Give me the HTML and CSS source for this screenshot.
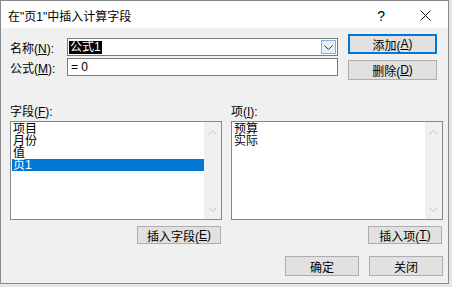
FILE: index.html
```html
<!DOCTYPE html>
<html lang="zh-CN">
<head>
    <meta charset="UTF-8">
    <title>在“页1”中插入计算字段</title>
    <link rel="stylesheet" href="styles.css">
</head>
<body>

    <div class="dialog">
        <div class="titlebar">
            <span class="title">在"页1"中插入计算字段</span>
            <span class="help">?</span>
            <span class="close">
                <svg width="11" height="11" viewBox="0 0 11 11"><path d="M0.5 0.5 L10.5 10.5 M10.5 0.5 L0.5 10.5" stroke="#111" stroke-width="1" fill="none"/></svg>
            </span>
        </div>

        <div class="body">
            <div class="top">
                <div class="fields">
                    <div class="field">
                        <label>名称(<u>N</u>):</label>
                        <div class="combo">
                            <span class="selected-text">公式1</span>
                            <span class="drop">
                                <svg width="9" height="5" viewBox="0 0 9 5"><path d="M0.5 0.5 L4.5 4.5 L8.5 0.5" stroke="#333" stroke-width="1" fill="none"/></svg>
                            </span>
                        </div>
                    </div>
                    <div class="field">
                        <label>公式(<u>M</u>):</label>
                        <div class="textbox">= 0</div>
                    </div>
                </div>
                <div class="side_buttons">
                    <button class="btn btn_default">添加(<u>A</u>)</button>
                    <button class="btn">删除(<u>D</u>)</button>
                </div>
            </div>

            <div class="lists">
                <div class="list_col">
                    <div class="list_label">字段(<u>F</u>):</div>
                    <div class="listbox">
                        <div class="items">
                            <div class="item">项目</div>
                            <div class="item">月份</div>
                            <div class="item">值</div>
                            <div class="item active">页1</div>
                        </div>
                        <div class="scroll">
                            <svg width="9" height="5" viewBox="0 0 9 5"><path d="M0.5 4.5 L4.5 0.5 L8.5 4.5" stroke="#c2c2c2" stroke-width="1" fill="none"/></svg>
                            <svg width="9" height="5" viewBox="0 0 9 5"><path d="M0.5 0.5 L4.5 4.5 L8.5 0.5" stroke="#c2c2c2" stroke-width="1" fill="none"/></svg>
                        </div>
                    </div>
                    <div class="list_actions">
                        <button class="btn btn_field">插入字段(<u>E</u>)</button>
                    </div>
                </div>

                <div class="list_col">
                    <div class="list_label">项(<u>I</u>):</div>
                    <div class="listbox">
                        <div class="items">
                            <div class="item">预算</div>
                            <div class="item">实际</div>
                        </div>
                        <div class="scroll">
                            <svg width="9" height="5" viewBox="0 0 9 5"><path d="M0.5 4.5 L4.5 0.5 L8.5 4.5" stroke="#c2c2c2" stroke-width="1" fill="none"/></svg>
                            <svg width="9" height="5" viewBox="0 0 9 5"><path d="M0.5 0.5 L4.5 4.5 L8.5 0.5" stroke="#c2c2c2" stroke-width="1" fill="none"/></svg>
                        </div>
                    </div>
                    <div class="list_actions">
                        <button class="btn btn_item">插入项(<u>T</u>)</button>
                    </div>
                </div>
            </div>

            <div class="footer">
                <button class="btn btn_footer">确定</button>
                <button class="btn btn_footer">关闭</button>
            </div>
        </div>
    </div>

</body>
</html>
```

FILE: styles.css
```css
html, body {
    margin: 0;
    padding: 0;
}

body {
    width: 452px;
    height: 287px;
    background: #e6e6e6;
    font-family: "Liberation Sans", "Noto Sans CJK SC", sans-serif;
    font-size: 12px;
    color: #000;
}

.dialog {
    width: 447px;
    height: 282px;
    border: 1px solid #8a8a8a;
    background: #f0f0f0;
}

.titlebar {
    height: 27px;
    background: #fff;
    display: flex;
    align-items: center;
}

.title {
    padding-left: 7px;
    padding-top: 2px;
    flex: 1;
}

.help {
    font-size: 14px;
    margin-right: 35px;
    padding-top: 2px;
}

.close {
    display: flex;
    margin-right: 17px;
    padding-top: 2px;
}

.body {
    padding: 0 4px 0 9px;
}

.top {
    display: flex;
}

.fields {
    margin-top: 10px;
    display: flex;
    flex-direction: column;
    gap: 2px;
}

.field {
    display: flex;
    align-items: center;
    height: 18px;
}

.field label {
    width: 57px;
}

.combo, .textbox {
    box-sizing: border-box;
    width: 271px;
    height: 18px;
    border: 1px solid #7a7a7a;
    background: #fff;
    display: flex;
    align-items: center;
}

.selected-text {
    background: #000;
    color: #fff;
    margin-left: 1px;
    padding: 0 1px;
    line-height: 13px;
}

.drop {
    margin-left: auto;
    margin-right: 1px;
    box-sizing: border-box;
    width: 15px;
    height: 14px;
    border: 1px solid #7eb4ea;
    background: #e5f1fb;
    display: flex;
    align-items: center;
    justify-content: center;
}

.textbox {
    padding-left: 3px;
}

.side_buttons {
    margin-left: 10px;
    margin-top: 6px;
    display: flex;
    flex-direction: column;
    gap: 6px;
}

.btn {
    box-sizing: border-box;
    border: 1px solid #adadad;
    background: #e1e1e1;
    font-family: "Liberation Sans", "Noto Sans CJK SC", sans-serif;
    font-size: 12px;
    color: #000;
    padding: 0;
    display: flex;
    align-items: center;
    justify-content: center;
}

.side_buttons .btn {
    width: 89px;
    height: 20px;
}

.btn_default {
    border-color: #0078d7;
    box-shadow: inset 0 0 0 1px #0078d7;
}

.lists {
    margin-top: 25px;
    display: flex;
    gap: 9px;
}

.list_col {
    width: 212px;
}

.list_label {
    height: 16px;
    line-height: 14px;
}

.listbox {
    box-sizing: border-box;
    height: 99px;
    border: 1px solid #828790;
    background: #fff;
    display: flex;
}

.items {
    flex: 1;
    padding: 1px 0 0 1px;
}

.item {
    height: 12px;
    line-height: 12px;
    padding-left: 1px;
}

.item.active {
    background: #0078d7;
    color: #fff;
}

.scroll {
    width: 17px;
    background: #f0f0f0;
    display: flex;
    flex-direction: column;
    justify-content: space-between;
    align-items: center;
    padding: 8px 0 7px;
    box-sizing: border-box;
}

.list_actions {
    margin-top: 6px;
    display: flex;
    justify-content: flex-end;
}

.list_actions .btn {
    height: 18px;
}

.btn_field {
    width: 84px;
    margin-right: 1px;
}

.btn_item {
    width: 74px;
    margin-right: 1px;
}

.footer {
    margin-top: 12px;
    display: flex;
    justify-content: flex-end;
    gap: 10px;
    padding-right: 1px;
}

.btn_footer {
    width: 74px;
    height: 20px;
}
```
